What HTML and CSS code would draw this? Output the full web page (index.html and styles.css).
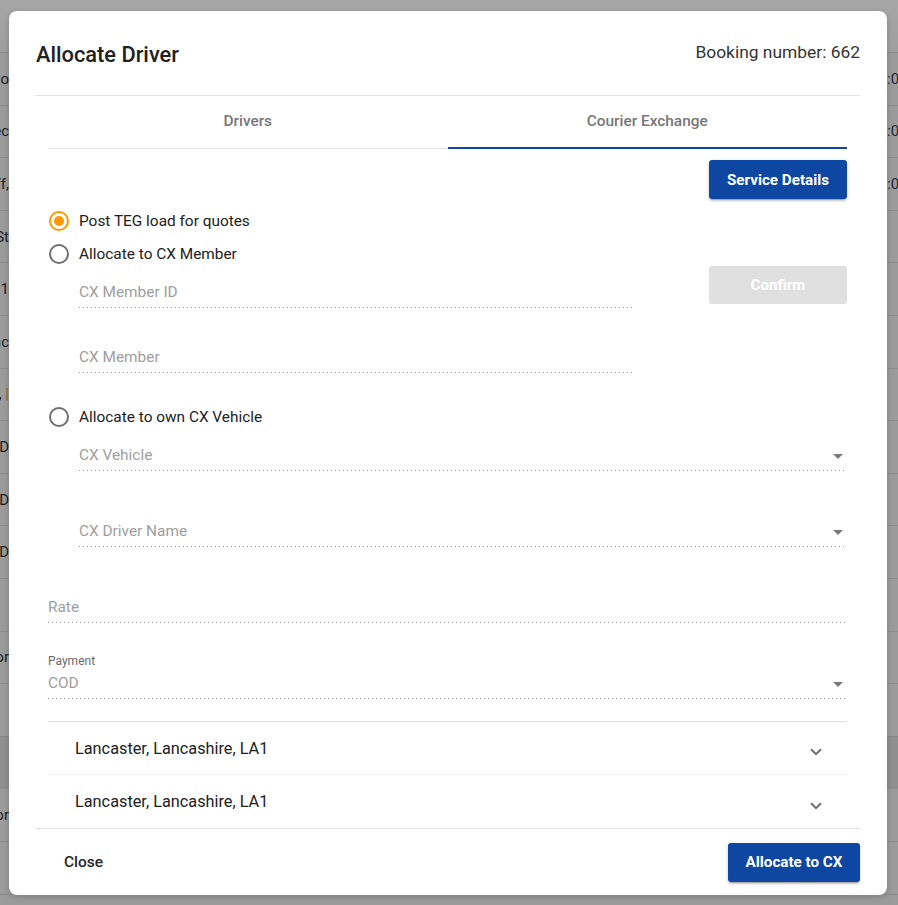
FILE: index.html
```html
<!DOCTYPE html>
<html lang="en">
<head>
<meta charset="utf-8">
<title>Allocate Driver</title>
<link rel="stylesheet" href="styles.css">
</head>
<body>
<div class="backdrop">
  <div class="bd-head"></div>
  <div class="bd-row"><span class="bd-left"><span>Lancaster Po</span></span><span class="bd-right">:00</span></div>
  <div class="bd-row"><span class="bd-left"><span>Collec</span></span><span class="bd-right">:00</span></div>
  <div class="bd-row"><span class="bd-left"><span>Sheff,</span></span><span class="bd-right">:00</span></div>
  <div class="bd-row"><span class="bd-left"><span>Main St</span></span><span class="bd-right"></span></div>
  <div class="bd-row"><span class="bd-left"><span>Unit 1</span></span><span class="bd-right"></span></div>
  <div class="bd-row"><span class="bd-left"><span>Lanc</span></span><span class="bd-right"></span></div>
  <div class="bd-row"><span class="bd-left"><span>York, <span class="bd-orange">|</span></span></span><span class="bd-right"></span></div>
  <div class="bd-row"><span class="bd-left"><span>COD</span></span><span class="bd-right"></span></div>
  <div class="bd-row"><span class="bd-left"><span>COD</span></span><span class="bd-right"></span></div>
  <div class="bd-row"><span class="bd-left"><span>COD</span></span><span class="bd-right"></span></div>
  <div class="bd-row"><span class="bd-left"></span><span class="bd-right"></span></div>
  <div class="bd-row"><span class="bd-left"><span>Vendor</span></span><span class="bd-right"></span></div>
  <div class="bd-row"><span class="bd-left"></span><span class="bd-right"></span></div>
  <div class="bd-row dark"><span class="bd-left"></span><span class="bd-right"></span></div>
  <div class="bd-row"><span class="bd-left"><span>Vendor</span></span><span class="bd-right"></span></div>
  <div class="bd-row"><span class="bd-left"></span><span class="bd-right"></span></div>
</div>

<div class="modal" role="dialog">
  <header class="m-head">
    <h2 class="m-title">Allocate Driver</h2>
    <div class="m-booking">Booking number: 662</div>
  </header>

  <div class="m-body">
    <nav class="tabs">
      <div class="tab">Drivers</div>
      <div class="tab active">Courier Exchange</div>
    </nav>

    <div class="top-actions">
      <button class="btn btn-primary btn-service">Service Details</button>
    </div>

    <div class="radio-row first"><span class="radio checked"></span><span>Post TEG load for quotes</span></div>
    <div class="radio-row second"><span class="radio"></span><span>Allocate to CX Member</span></div>

    <div class="member">
      <div class="member-fields">
        <div class="field">CX Member ID</div>
        <div class="field gap27">CX Member</div>
      </div>
      <button class="btn btn-confirm" disabled>Confirm</button>
    </div>

    <div class="radio-row third"><span class="radio"></span><span>Allocate to own CX Vehicle</span></div>

    <div class="field select indent"><span>CX Vehicle</span><span class="caret"></span></div>
    <div class="field select indent gap38"><span>CX Driver Name</span><span class="caret"></span></div>
    <div class="field wide gap38">Rate</div>

    <div class="field payment wide">
      <div class="pay-label">Payment</div>
      <div class="pay-value"><span>COD</span><span class="caret"></span></div>
    </div>

    <div class="panels">
      <div class="panel">
        <span>Lancaster, Lancashire, LA1</span>
        <svg class="chev" width="12" height="8" viewBox="0 0 12 8"><path d="M1 1.2 L6 6.2 L11 1.2" fill="none" stroke="#6f6f6f" stroke-width="2"/></svg>
      </div>
      <div class="panel last">
        <span>Lancaster, Lancashire, LA1</span>
        <svg class="chev" width="12" height="8" viewBox="0 0 12 8"><path d="M1 1.2 L6 6.2 L11 1.2" fill="none" stroke="#6f6f6f" stroke-width="2"/></svg>
      </div>
    </div>
  </div>

  <footer class="m-foot">
    <button class="btn btn-close">Close</button>
    <button class="btn btn-primary btn-allocate">Allocate to CX</button>
  </footer>
</div>
</body>
</html>
```

FILE: styles.css
```css
* { box-sizing: border-box; margin: 0; padding: 0; }
html, body { height: 100%; }
body {
  font-family: Roboto, "Noto Sans", "Liberation Sans", sans-serif;
  background: #9b9b9b;
  overflow: hidden;
  color: #212121;
}

/* backdrop page behind the dialog */
.backdrop { display: flex; flex-direction: column; height: 905px; }
.bd-head {
  height: 53px;
  flex: none;
  background: linear-gradient(#a6a6a6, #9f9f9f);
  border-bottom: 1px solid #8c8c8c;
}
.bd-row {
  height: 52.6px;
  flex: none;
  display: flex;
  align-items: center;
  border-bottom: 1px solid #8c8c8c;
  font-size: 15px;
  color: #1c1c1c;
}
.bd-row.dark { background: #8f8f8f; }
.bd-left {
  width: 9px;
  overflow: hidden;
  display: flex;
  justify-content: flex-end;
  white-space: nowrap;
}
.bd-right {
  margin-left: auto;
  width: 11px;
  overflow: hidden;
  white-space: nowrap;
  color: #1a2a3a;
}
.bd-orange { color: #a0621a; }

/* dialog */
.modal {
  position: absolute;
  left: 9px;
  top: 11px;
  width: 878px;
  height: 884px;
  background: #fff;
  border-radius: 8px;
  box-shadow: 0 2px 6px rgba(0, 0, 0, .18);
  padding: 0 27px 0 26px;
  display: flex;
  flex-direction: column;
}
.m-head {
  height: 85px;
  flex: none;
  border-bottom: 1px solid #e2e2e2;
  display: flex;
  justify-content: space-between;
  align-items: flex-start;
}
.m-title {
  font-size: 21.8px;
  font-weight: 500;
  line-height: 28px;
  margin-top: 30px;
  margin-left: 1px;
  color: #212121;
}
.m-booking {
  font-size: 17.4px;
  line-height: 24px;
  margin-top: 29px;
  color: #333;
}

.m-body { padding: 0 13px; flex: none; }

.tabs { display: flex; height: 53px; }
.tab {
  flex: 1;
  display: flex;
  align-items: center;
  justify-content: center;
  font-size: 15.4px;
  font-weight: 500;
  color: #777;
  border-bottom: 1px solid #e2e2e2;
  padding-bottom: 2px;
}
.tab.active { border-bottom: 2px solid #0d47a1; padding-bottom: 1px; }

.top-actions { display: flex; justify-content: flex-end; margin-top: 11px; }

.btn {
  font-family: inherit;
  border: 0;
  border-radius: 3px;
  font-size: 15.2px;
  font-weight: 700;
  color: #fff;
  height: 39px;
  cursor: pointer;
}
.btn-primary {
  background: #0d47a1;
  box-shadow: 0 3px 1px -2px rgba(0,0,0,.2), 0 2px 2px 0 rgba(0,0,0,.14), 0 1px 5px 0 rgba(0,0,0,.12);
}
.btn-service { width: 138px; }
.btn-confirm {
  width: 138px;
  height: 38px;
  margin-top: -4px;
  background: #e0e0e0;
  color: #fff;
}
.btn-allocate { width: 132px; }
.btn-close {
  background: none;
  color: #262626;
  font-weight: 500;
  font-size: 15.5px;
  padding: 0 16px;
  margin-left: 13px;
}

.radio-row {
  display: flex;
  align-items: center;
  gap: 10px;
  height: 32px;
  font-size: 15.4px;
  color: #212121;
}
.radio-row.first { margin-top: 6px; }
.radio-row.second { margin-top: 1px; }
.radio-row.third { margin-top: 28px; }
.radio {
  width: 20px;
  height: 20px;
  margin-left: 1px;
  border: 2px solid #6f6f6f;
  border-radius: 50%;
  display: flex;
  align-items: center;
  justify-content: center;
  flex: none;
}
.radio.checked { border-color: #ff9800; }
.radio.checked::after {
  content: "";
  width: 10px;
  height: 10px;
  border-radius: 50%;
  background: #ff9800;
}

.field {
  padding: 11px 0 5px;
  line-height: 22px;
  font-size: 15.4px;
  color: #9e9e9e;
  background-image: linear-gradient(to right, rgba(0,0,0,.38) 0, rgba(0,0,0,.38) 33%, transparent 0);
  background-size: 4px 1px;
  background-repeat: repeat-x;
  background-position: 0 bottom;
}
.gap27 { margin-top: 27px; }
.gap38 { margin-top: 38px; }
.indent { margin-left: 31px; margin-right: 2px; }
.wide { margin-right: 2px; }
.select { display: flex; justify-content: space-between; align-items: center; }
.caret {
  width: 0;
  height: 0;
  border-left: 5.5px solid transparent;
  border-right: 5.5px solid transparent;
  border-top: 5.5px solid #7a7a7a;
  margin-right: 2px;
  margin-top: 2px;
}

.member { display: flex; justify-content: space-between; align-items: flex-start; }
.member-fields { width: 554px; margin-left: 31px; }
.member-fields .field { width: 100%; }

.payment { margin-top: 22px; padding-top: 8px; }
.pay-label { font-size: 12px; line-height: 16px; color: #6b6b6b; margin-bottom: 3px; }
.pay-value { display: flex; justify-content: space-between; align-items: center; }

.panels { margin-top: 22px; border-top: 1px solid #dedede; }
.panel {
  height: 53px;
  display: flex;
  align-items: center;
  justify-content: space-between;
  padding: 0 25px 0 27px;
  font-size: 16.3px;
  color: #212121;
  border-bottom: 1px solid #f0f0f0;
}
.panel.last { border-bottom: 0; }
.chev { margin-top: 8px; }

.m-foot {
  height: 67px;
  flex: none;
  border-top: 1px solid #e2e2e2;
  display: flex;
  align-items: center;
  justify-content: space-between;
}
```
